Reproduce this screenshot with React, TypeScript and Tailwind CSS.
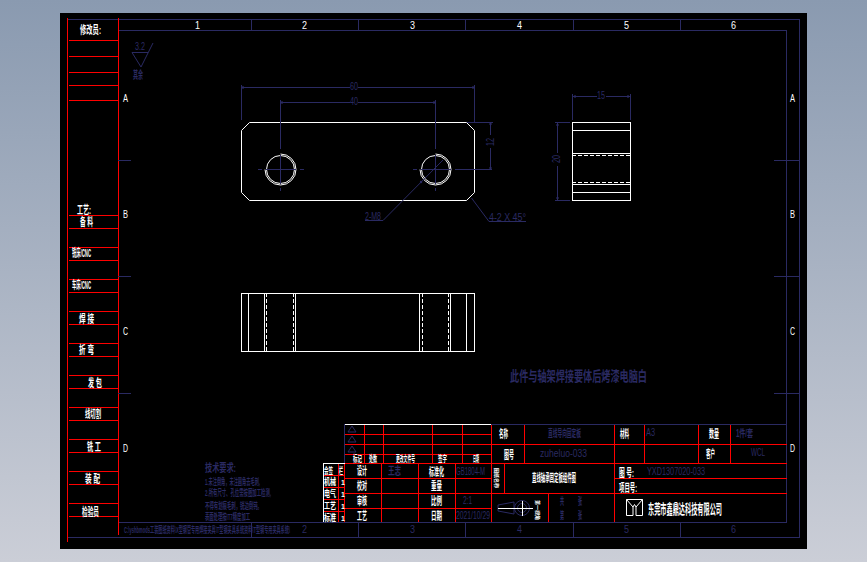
import React from 'react';

const NAVY = '#2a2a62';
const RED = '#ff0000';

type TextProps = {
  x: number;
  y: number;
  w?: number;
  s?: number;
  c?: string;
  b?: boolean;
  children: React.ReactNode;
};

// rough unsqueezed width, so the squeeze can be done with a scale
const naturalWidth = (t: string, s: number) =>
  [...t].reduce((sum, ch) => sum + (ch.charCodeAt(0) > 255 ? s : s * 0.56), 0);

// x = left edge, y = vertical middle, w = squeezed width (CAD text is narrow)
const T = ({ x, y, w, s = 9, c = NAVY, b = false, children }: TextProps) => {
  const natural = naturalWidth(String(children), s);
  const k = w ? w / natural : 1;
  return (
    <text
      transform={`translate(${x} ${y}) scale(${k} 1)`}
      fill={c}
      fontSize={s}
      fontWeight={b ? 700 : 400}
      dominantBaseline="central"
      textLength={w ? natural : undefined}
      lengthAdjust={w ? 'spacingAndGlyphs' : undefined}
    >
      {children}
    </text>
  );
};

// white label in the title block
const L = (p: Omit<TextProps, 'c' | 'b'>) => <T {...p} c="#ffffff" b />;

const Line = ({ d, c = NAVY, dash }: { d: string; c?: string; dash?: string }) => (
  <path d={d} stroke={c} fill="none" strokeWidth={1} strokeDasharray={dash} shapeRendering="crispEdges" />
);

const sideRows = [40.5, 56.5, 72.5, 85.5, 100.5, 215.5, 228.5, 247.5, 260.5, 279.5, 292.5, 311.5, 324.5, 343.5, 356.5, 375.5, 388.5, 407.5, 420.5, 439.5, 452.5, 471.5, 484.5, 503.5, 516.5];

const sideLabels: [string, number, number, number][] = [
  ['修改员:', 80, 30, 21],
  ['工艺:', 77, 210, 14],
  ['备 料', 80, 222, 13],
  ['铣床/CNC', 72, 253, 19],
  ['车床/CNC', 72, 285, 19],
  ['焊 接', 79, 319, 15],
  ['折 弯', 79, 350, 15],
  ['发 包', 88, 383, 14],
  ['线切割', 85, 414, 16],
  ['铣 工', 87, 447, 14],
  ['装 配', 85, 479, 15],
  ['检验员', 82, 512, 17],
];

const columns = [197, 304, 412, 519, 626, 733];
const columnTicks = [251, 358, 465, 573, 680];
const rowTicks = [160.5, 276.5, 393.5];
const rowLetters: [string, number][] = [['A', 98], ['B', 214], ['C', 331], ['D', 448]];

const Hole = ({ cx }: { cx: number }) => (
  <g>
    <circle cx={cx} cy={169.5} r={14} stroke="#fff" fill="none" />
    <path d={`M${cx} 154 A15.5 15.5 0 1 1 ${cx - 15.5} 169.5`} stroke="#fff" fill="none" />
    <Line d={`M${cx - 23} 169.5H${cx - 19}M${cx - 15} 169.5H${cx + 15}M${cx + 19} 169.5H${cx + 23}`} />
    <Line d={`M${cx} 146V149M${cx} 155V184M${cx} 188V191`} />
  </g>
);

const Arrow = ({ x, y }: { x: number; y: number }) => <circle cx={x} cy={y} r={1.2} fill={NAVY} />;

function Drawing() {
  return (
    <svg width={747} height={536} viewBox="60 13 747 536" className="block font-['Liberation_Sans','Noto_Sans_CJK_SC',sans-serif]">
      {/* sheet frame */}
      <Line d="M67.5 19.5H799.5V537.5H67.5" />
      <Line d="M118.5 30.5H786.5V522.5H118.5" />
      <Line d="M67.5 18V542" c={RED} />
      <Line d="M118.5 18V535" c={RED} />
      {sideRows.map((y) => (
        <Line key={y} d={`M69 ${y}H118`} c={RED} />
      ))}
      {sideLabels.map(([t, x, y, w]) => (
        <L key={t} x={x} y={y} w={w} s={11}>{t}</L>
      ))}

      {/* zone marks */}
      {columns.map((x, i) => (
        <g key={x}>
          <T x={x - 2} y={25} w={5} s={11} c="#ffffff">{i + 1}</T>
          {i > 0 && <T x={x - 2} y={529} w={5} s={11}>{i + 1}</T>}
        </g>
      ))}
      {columnTicks.map((x) => (
        <Line key={x} d={`M${x}.5 19V30M${x}.5 522V537`} />
      ))}
      {rowTicks.map((y) => (
        <Line key={y} d={`M118 ${y}H131M774 ${y}H799`} />
      ))}
      {rowLetters.map(([t, y]) => (
        <g key={t}>
          <T x={123} y={y} w={5} s={11} c="#ffffff">{t}</T>
          <T x={790} y={y} w={5} s={11} c="#ffffff">{t}</T>
        </g>
      ))}

      {/* roughness symbol */}
      <T x={135} y={47} w={10} s={10}>3.2</T>
      <Line d="M132 52.5H148" />
      <path d="M132 52.5L141 67L153 43" stroke={NAVY} fill="none" />
      <T x={133} y={75} w={10} s={11} b>其余</T>

      {/* front view */}
      <path d="M249.5 122.5H466.5L474.5 130.5V192.5L466.5 200.5H249.5L241.5 192.5V130.5Z" stroke="#fff" fill="none" />
      <Hole cx={280.5} />
      <Hole cx={435.5} />
      <Line d="M241.5 85V120M474.5 85V122M241.5 87.5H350M358 87.5H474.5" />
      <Arrow x={243} y={87.5} />
      <Arrow x={473} y={87.5} />
      <T x={350} y={87} w={8} s={10}>60</T>
      <Line d="M280.5 100V146M435.5 100V146M280.5 102.5H350M358 102.5H435.5" />
      <Arrow x={282} y={102.5} />
      <Arrow x={434} y={102.5} />
      <T x={350} y={102} w={8} s={10}>40</T>
      <Line d="M467 122.5H493M455 169.5H492M490.5 122.5V135M490.5 148V169" />
      <Arrow x={490.5} y={124} />
      <Arrow x={490.5} y={168} />
      <text x={490} y={142} fill={NAVY} fontSize={10} textLength={8} lengthAdjust="spacingAndGlyphs" textAnchor="middle" dominantBaseline="central" transform="rotate(-90 490 142)">12</text>
      <path d="M443 160L383 220.5H365" stroke={NAVY} fill="none" />
      <Arrow x={421} y={182} />
      <T x={365} y={217} w={16} s={10}>2-M8</T>
      <path d="M471.5 198L489 221.5H526" stroke={NAVY} fill="none" />
      <T x={489} y={218} w={37} s={10}>4-2 X 45°</T>

      {/* side view */}
      <rect x={572.5} y={122.5} width={58} height={78} stroke="#fff" fill="none" />
      <Line c="#fff" d="M572 130.5H630M572 153.5H630M572 184.5H630M572 192.5H630" />
      <Line c="#fff" dash="4 2" d="M572 155.5H630M572 182.5H630" />
      <Line d="M572.5 94V120M630.5 94V120M572.5 96.5H597M606 96.5H630.5" />
      <Arrow x={575} y={96.5} />
      <Arrow x={628} y={96.5} />
      <T x={597} y={96} w={8} s={10}>15</T>
      <Line d="M555 122.5H570M555 200.5H570M557.5 122.5V153M557.5 166V200.5" />
      <Arrow x={557.5} y={125} />
      <Arrow x={557.5} y={198} />
      <text x={556} y={159} fill={NAVY} fontSize={10} textLength={8} lengthAdjust="spacingAndGlyphs" textAnchor="middle" dominantBaseline="central" transform="rotate(-90 556 159)">20</text>

      {/* top view */}
      <rect x={241.5} y={293.5} width={233} height={58} stroke="#fff" fill="none" />
      <Line c="#fff" d="M248.5 293V351M264.5 293V351M295.5 293V351M419.5 293V351M450.5 293V351M466.5 293V351" />
      <Line c="#fff" dash="4 2" d="M266.5 293V351M293.5 293V351M422.5 293V351M448.5 293V351" />

      {/* note */}
      <T x={510} y={376} w={137} s={14} b>此件与轴架焊接要体后烤漆电脑白</T>

      {/* technical requirements */}
      <T x={205} y={468} w={31} s={11} b>技术要求:</T>
      <T x={205} y={482} w={55} s={9} b>1.未注倒角，未注圆角去毛刺,</T>
      <T x={205} y={493} w={66} s={9} b>2.所有尺寸、孔位需按图加工检测,</T>
      <T x={205} y={506} w={57} s={9} b>不得有划痕毛刺，锐边倒钝。</T>
      <T x={205} y={517} w={45} s={9} b>表面处理按IT7精度加工</T>
      <T x={124} y={530} w={166} s={9} b>C:\yshbmods工装图纸资料\X型钢管专用焊接夹具\T型钢夹具系统资料\T型钢专用夹具系统\</T>

      {/* revision table */}
      <Line c="#fff" d="M344 424.5H491" />
      <Line d="M344.5 424V464M491 424.5H787" />
      <Line c={RED} d="M345 434.5H491M345 444.5H491M345 454.5H491M345 463.5H491" />
      <Line c={RED} d="M364.5 425V463M383.5 425V463M432.5 425V463M462.5 425V463" />
      {[429, 439, 449].map((y) => (
        <path key={y} d={`M352 ${y - 3}L356 ${y + 3}H348Z`} stroke={NAVY} fill="none" />
      ))}
      <L x={353} y={459} w={9} s={9}>标记</L>
      <L x={369} y={459} w={8} s={9}>处数</L>
      <L x={396} y={459} w={19} s={9}>更改文件号</L>
      <L x={438} y={459} w={9} s={9}>签字</L>
      <L x={473} y={459} w={6} s={9}>日期</L>

      {/* sign-off table */}
      <Line c={RED} d="M345 478.5H491M345 493.5H491M345 508.5H491" />
      <Line c={RED} d="M344.5 464V522M381.5 464V522M418.5 464V522M455.5 464V522M491.5 425V522" />
      <L x={357} y={471} w={10} s={11}>设计</L>
      <T x={388} y={471} w={13} s={11} b>王志</T>
      <L x={429} y={472} w={15} s={11}>标准化</L>
      <T x={456} y={471} w={29} s={10}>GB1804-M</T>
      <L x={357} y={486} w={10} s={11}>校对</L>
      <L x={431} y={486} w={11} s={11}>重量</L>
      <L x={357} y={501} w={10} s={11}>审核</L>
      <L x={431} y={501} w={11} s={11}>比例</L>
      <T x={463} y={501} w={9} s={10}>2:1</T>
      <L x={357} y={516} w={10} s={11}>工艺</L>
      <L x={431} y={516} w={11} s={11}>日期</L>
      <T x={456} y={516} w={34} s={10}>2021/10/29</T>

      {/* countersign column */}
      <Line c="#fff" d="M324 463.5H345M323.5 463V522" />
      <Line c={RED} d="M324 475.5H345M324 487.5H345M324 499.5H345M324 511.5H345M338.5 464V522" />
      <L x={324} y={471} w={9} s={9}>会签</L>
      <L x={339} y={471} w={4} s={9}>栏</L>
      {['机械', '电气', '工艺', '标准'].map((t, i) => (
        <g key={t}>
          <L x={324} y={482 + i * 12} w={12} s={9}>{t}</L>
          <L x={341} y={482 + i * 12} s={7}>1</L>
        </g>
      ))}

      {/* title block */}
      <Line c={RED} d="M491 444.5H787M491 463.5H787M491 493.5H787M614 478.5H787" />
      <Line c={RED} d="M524.5 425V463M614.5 425V522M644.5 425V463M698.5 425V463M730.5 425V463M504.5 463V493M548.5 493V522" />
      <L x={499} y={434} w={9} s={11}>名称</L>
      <T x={548} y={434} w={33} s={10} b>直线导向固定板</T>
      <L x={504} y={455} w={10} s={11}>图号</L>
      <T x={540} y={454} w={47} s={10}>zuheluo-033</T>
      <L x={620} y={434} w={9} s={11}>材料</L>
      <T x={646} y={433} w={9} s={10}>A3</T>
      <L x={709} y={434} w={10} s={11}>数量</L>
      <T x={736} y={434} w={17} s={10} b>1件/套</T>
      <L x={706} y={454} w={9} s={11}>客户</L>
      <T x={751} y={453} w={14} s={10}>WCL</T>
      <text x={497} y={478} fill="#fff" fontSize={5} fontWeight={700} textAnchor="middle" dominantBaseline="central" transform="rotate(90 497 478)">图纸名称</text>
      <L x={532} y={478} w={44} s={11}>直线轴承固定板组件图</L>
      <L x={619} y={473} w={15} s={11}>图 号:</L>
      <T x={647} y={472} w={58} s={10}>YXD1307020-033</T>
      <L x={619} y={488} w={18} s={11}>项目号:</L>

      {/* projection symbol */}
      <path d="M498 505L514 502V514L498 511Z" stroke={NAVY} fill="none" />
      <circle cx={522} cy={508} r={7.5} stroke={NAVY} fill="none" />
      <circle cx={522} cy={508} r={4.5} stroke={NAVY} fill="none" />
      <Line c="#fff" d="M498 508.5H533M522.5 501V516" />
      <text x={538} y={510} fill="#fff" fontSize={5} fontWeight={700} textAnchor="middle" dominantBaseline="central" transform="rotate(90 538 510)">第一视角</text>

      <T x={560} y={502} w={4} s={10} b>共</T>
      <T x={578} y={502} w={4} s={10} b>张</T>
      <T x={560} y={516} w={4} s={10} b>第</T>
      <T x={578} y={516} w={4} s={10} b>张</T>

      {/* company logo */}
      <path d="M626.5 499.5H642.5V515.5H636V507L642.5 499.5M626.5 499.5V515.5H633V507L626.5 499.5M633 507L634.5 504.5L636 507" stroke="#fff" fill="none" />
      <L x={648} y={509} w={74} s={14}>东莞市鑫鼎达科技有限公司</L>
    </svg>
  );
}

export default function App() {
  return (
    <div className="w-[867px] h-[562px] overflow-hidden bg-gradient-to-b from-[#8a9ab0] to-[#cbced7] pt-[13px] pl-[60px]">
      <div className="w-[747px] h-[536px] bg-black">
        <Drawing />
      </div>
    </div>
  );
}
